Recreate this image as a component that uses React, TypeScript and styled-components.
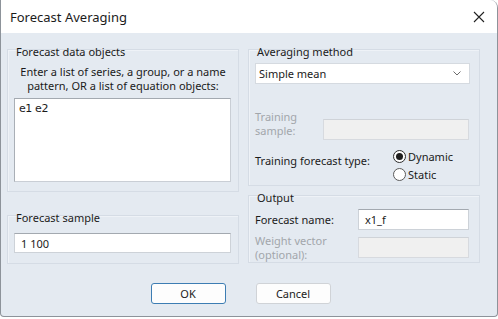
import React from "react";
import styled, { createGlobalStyle } from "styled-components";

const Global = createGlobalStyle`
  html, body { margin: 0; padding: 0; background: #ffffff; }
  body { font-family: "Noto Sans", "Open Sans", sans-serif; font-size: 11px; color: #1a1a1a; }
  * { box-sizing: border-box; }
`;

const Window = styled.div`
  width: 498px;
  height: 317px;
  display: flex;
  flex-direction: column;
  background: #e4eaf1;
  border: 1px solid #8d939a;
  border-top: none;
  border-radius: 0 8px 4px 4px;
  overflow: hidden;
`;

const TitleBar = styled.div`
  height: 33px;
  flex: none;
  background: #ffffff;
  display: flex;
  align-items: center;
  justify-content: space-between;
  padding: 0 10px 0 9px;
  font-size: 13px;
  color: #1b1b1b;
`;

const CloseIcon = styled.svg`
  width: 12px;
  height: 12px;
  margin-right: 2px;
`;

const Body = styled.div`
  flex: 1;
  padding: 16px 17px 0 6px;
  display: flex;
  flex-direction: column;
`;

const Columns = styled.div`
  display: grid;
  grid-template-columns: 232px 232px;
  column-gap: 9px;
`;

const Column = styled.div`
  display: flex;
  flex-direction: column;
`;

const Group = styled.div<{ $h: number; $mt?: number }>`
  height: ${(p) => p.$h}px;
  margin-top: ${(p) => p.$mt ?? 0}px;
  border: 1px solid #d5dce5;
  box-shadow: inset 1px 1px 0 #eef2f7;
  padding: 0 6px;
  display: flex;
  flex-direction: column;
`;

const Legend = styled.div`
  margin-top: -6px;
  height: 16px;
  line-height: 16px;
  padding-left: 2px;
  color: #1b1b1b;
`;

const Instructions = styled.div`
  margin-top: 5px;
  line-height: 14px;
  text-align: center;
`;

const TextArea = styled.div`
  margin-top: 5px;
  width: 217px;
  height: 84px;
  background: #ffffff;
  border: 1px solid #c9ced5;
  border-top-color: #a3a9b0;
  border-left-color: #a9afb6;
  padding: 3px 4px;
  font-family: "DejaVu Sans", sans-serif;
  font-size: 11px;
  letter-spacing: -0.4px;
`;

const TextInput = styled.div<{ $w: number; $h?: number; $mt?: number; $disabled?: boolean }>`
  width: ${(p) => p.$w}px;
  height: ${(p) => p.$h ?? 21}px;
  margin-top: ${(p) => p.$mt ?? 0}px;
  flex: none;
  background: ${(p) => (p.$disabled ? "#f0f0f0" : "#ffffff")};
  border: 1px solid ${(p) => (p.$disabled ? "#d7dadf" : "#cdd2d8")};
  border-top-color: ${(p) => (p.$disabled ? "#cfd3d8" : "#a3a9b0")};
  padding: 0 6px;
  display: flex;
  align-items: center;
`;

const Select = styled.div`
  margin-top: 3px;
  width: 215px;
  height: 21px;
  background: #ffffff;
  border: 1px solid #d5dae0;
  padding: 0 8px 0 3px;
  display: flex;
  align-items: center;
  justify-content: space-between;
`;

const Row = styled.div<{ $mt: number; $align?: string; $pr?: number }>`
  margin-top: ${(p) => p.$mt}px;
  display: flex;
  align-items: ${(p) => p.$align ?? "center"};
  justify-content: space-between;
  padding-right: ${(p) => p.$pr ?? 4}px;
`;

const Label = styled.div<{ $disabled?: boolean; $mt?: number }>`
  line-height: 14px;
  margin-top: ${(p) => p.$mt ?? 0}px;
  color: ${(p) => (p.$disabled ? "#a2a6ab" : "#1b1b1b")};
`;

const RadioGroup = styled.div`
  display: flex;
  flex-direction: column;
  gap: 3px;
  width: 80px;
`;

const RadioItem = styled.label`
  display: flex;
  align-items: center;
  gap: 2px;
  height: 15px;
`;

const RadioCircle = styled.span<{ $on?: boolean }>`
  width: 13px;
  height: 13px;
  border-radius: 50%;
  border: 1px solid ${(p) => (p.$on ? "#2b2b2b" : "#5a5a5a")};
  background: #ffffff;
  display: flex;
  align-items: center;
  justify-content: center;
  &::after {
    content: "";
    width: 7px;
    height: 7px;
    border-radius: 50%;
    background: ${(p) => (p.$on ? "#1f1f1f" : "transparent")};
  }
`;

const Buttons = styled.div`
  margin-top: 19px;
  padding-right: 6px;
  display: flex;
  justify-content: center;
  gap: 30px;
`;

const Button = styled.div<{ $default?: boolean }>`
  width: 75px;
  height: 21px;
  background: #fdfdfd;
  border: 1px solid ${(p) => (p.$default ? "#3d7db3" : "#d0d3d7")};
  border-radius: 3px;
  display: flex;
  align-items: center;
  justify-content: center;
  color: #1b1b1b;
`;

export default function App() {
  return (
    <>
      <Global />
      <Window>
        <TitleBar>
          <span>Forecast Averaging</span>
          <CloseIcon viewBox="0 0 12 12">
            <path d="M1 1 L11 11 M11 1 L1 11" stroke="#222" strokeWidth="1.1" fill="none" />
          </CloseIcon>
        </TitleBar>
        <Body>
          <Columns>
            <Column>
              <Group $h={143}>
                <Legend>Forecast data objects</Legend>
                <Instructions>
                  Enter a list of series, a group, or a name
                  <br />
                  pattern, OR a list of equation objects:
                </Instructions>
                <TextArea>e1 e2</TextArea>
              </Group>
              <Group $h={49} $mt={23}>
                <Legend>Forecast sample</Legend>
                <TextInput $w={217} $h={20} $mt={7}>1 100</TextInput>
              </Group>
            </Column>
            <Column>
              <Group $h={137}>
                <Legend>Averaging method</Legend>
                <Select>
                  <span>Simple mean</span>
                  <svg width="8" height="5" viewBox="0 0 8 5">
                    <path d="M0.5 0.5 L4 4 L7.5 0.5" stroke="#6b6b6b" strokeWidth="1" fill="none" />
                  </svg>
                </Select>
                <Row $mt={26} $align="flex-start">
                  <Label $disabled>
                    Training
                    <br />
                    sample:
                  </Label>
                  <TextInput $w={146} $mt={9} $disabled />
                </Row>
                <Row $mt={9} $align="flex-start" $pr={0}>
                  <Label $mt={5}>Training forecast type:</Label>
                  <RadioGroup>
                    <RadioItem>
                      <RadioCircle $on />
                      Dynamic
                    </RadioItem>
                    <RadioItem>
                      <RadioCircle />
                      Static
                    </RadioItem>
                  </RadioGroup>
                </Row>
              </Group>
              <Group $h={68} $mt={9}>
                <Legend>Output</Legend>
                <Row $mt={3}>
                  <Label>Forecast name:</Label>
                  <TextInput $w={111}>x1_f</TextInput>
                </Row>
                <Row $mt={4} $align="flex-start">
                  <Label $disabled>
                    Weight vector
                    <br />
                    (optional):
                  </Label>
                  <TextInput $w={111} $mt={3} $disabled />
                </Row>
              </Group>
            </Column>
          </Columns>
          <Buttons>
            <Button $default>OK</Button>
            <Button>Cancel</Button>
          </Buttons>
        </Body>
      </Window>
    </>
  );
}
